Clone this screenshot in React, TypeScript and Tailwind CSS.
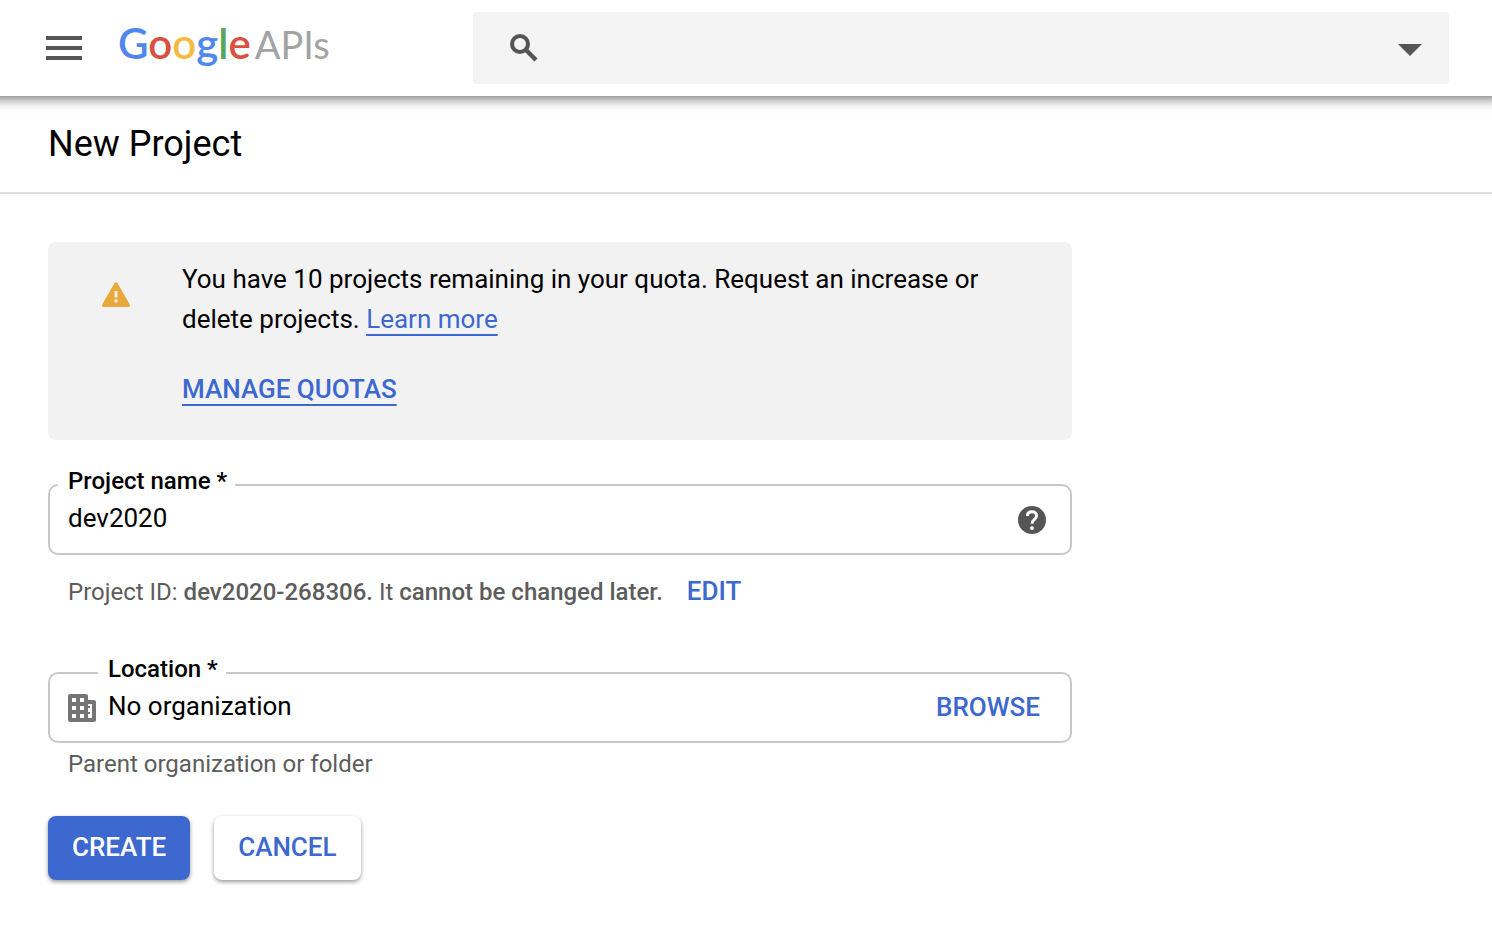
import { useState } from "react";

function GoogleApisLogo() {
  return (
    <a href="#home" className="flex items-baseline gap-1 pb-2.5 leading-[48px]">
      <span className="text-[42px] font-semibold font-[Lato,sans-serif]">
        <span className="text-[#4e87ed]">G</span>
        <span className="text-[#d94f40]">o</span>
        <span className="text-[#f2bc42]">o</span>
        <span className="text-[#4e87ed]">g</span>
        <span className="text-[#58a55c]">l</span>
        <span className="text-[#d94f40]">e</span>
      </span>
      <span className="text-[38px] text-[#a3a3a3] font-[Lato,sans-serif]">APIs</span>
    </a>
  );
}

function Header() {
  return (
    <header className="relative flex h-24 items-center bg-white pr-[43px] pl-[46px] shadow-[0_-10px_12px_12px_rgba(0,0,0,0.6)]">
      <button type="button" aria-label="Open menu" className="shrink-0">
        <svg width="36" height="24" viewBox="0 0 36 24" fill="#555555">
          <path d="M0 0h36v4H0zM0 10h36v4H0zM0 20h36v4H0z" />
        </svg>
      </button>
      <div className="ml-9 w-[355px] shrink-0">
        <GoogleApisLogo />
      </div>
      <label className="flex h-[72px] flex-1 items-center rounded bg-[#f4f4f4] pr-[27px] pl-9">
        <svg width="30" height="30" viewBox="0 0 30 30" fill="none" stroke="#555555">
          <circle cx="11" cy="11" r="8" strokeWidth="4" />
          <path d="M17 17l10 10" strokeWidth="4.4" />
        </svg>
        <input
          type="search"
          aria-label="Search products and resources"
          className="mx-4 h-12 min-w-0 flex-1 bg-transparent text-[26px] outline-none"
        />
        <button type="button" aria-label="Show search options">
          <svg width="24" height="12" viewBox="0 0 24 12" fill="#555555" className="mt-1">
            <path d="M0 0h24L12 12z" />
          </svg>
        </button>
      </label>
    </header>
  );
}

function QuotaNotice() {
  return (
    <section className="flex rounded-lg bg-[#f2f2f2] pt-[17px] pr-16 pb-[31px] pl-[54px]">
      <svg width="28" height="25" viewBox="0 0 28 25" className="mt-[23px] mr-[52px] shrink-0">
        <path
          fill="#e8a83b"
          d="M12.6 1C13.2-.1 14.8-.1 15.4 1L27.8 22.6C28.4 23.7 27.8 25 26.6 25H1.4C.2 25-.4 23.7.2 22.6z"
        />
        <path fill="#f2f2f2" d="M12.6 9h2.8v6.4h-2.8zM12.6 17.6h2.8v2.8h-2.8z" />
      </svg>
      <div className="leading-10">
        <p>
          You have 10 projects remaining in your quota. Request an increase or delete projects.{" "}
          <a
            href="#learn-more"
            className="text-[#3c68cf] underline decoration-2 underline-offset-[6px] [text-decoration-skip-ink:none]"
          >
            Learn more
          </a>
        </p>
        <p className="mt-[30px]">
          <a
            href="#quotas"
            className="font-medium text-[#3c68cf] underline decoration-2 underline-offset-[6px] [text-decoration-skip-ink:none]"
          >
            MANAGE QUOTAS
          </a>
        </p>
      </div>
    </section>
  );
}

export default function App() {
  const [name, setName] = useState("dev2020");
  const [location, setLocation] = useState("No organization");

  return (
    <div className="min-h-screen bg-white font-[Roboto,sans-serif] text-[26px] text-black">
      <Header />
      <div className="flex h-[98px] items-center border-b-2 border-[#e0e0e0]">
        <h1 className="px-12 text-4xl leading-10">New Project</h1>
      </div>
      <main className="px-12 pt-12 pb-12">
        <form className="max-w-5xl" onSubmit={(e) => e.preventDefault()}>
          <QuotaNotice />

          <fieldset className="mt-[27px] rounded-[10px] border-2 border-[#c8c8c8] pb-[18px]">
            <legend className="ml-2 pr-2 pb-2 pl-2.5 text-2xl leading-7 font-medium">
              <label htmlFor="project-name">Project name *</label>
            </legend>
            <div className="flex items-center pr-6 pl-[18px]">
              <input
                id="project-name"
                value={name}
                onChange={(e) => setName(e.target.value)}
                className="h-8 min-w-0 flex-1 bg-transparent pb-0.5 outline-none"
              />
              <button type="button" aria-label="Help with the project name" className="pt-0.5">
                <svg width="28" height="28" viewBox="2 2 20 20" fill="#555555">
                  <path d="M12 2C6.48 2 2 6.48 2 12s4.48 10 10 10 10-4.48 10-10S17.52 2 12 2z" />
                  <path
                    d="M8.7 9.2C8.7 7.1 10.1 6.1 12 6.1s3.3 1.1 3.3 2.9c0 2.6-3.3 2.7-3.3 5.7"
                    fill="none"
                    stroke="#ffffff"
                    strokeWidth="2.1"
                  />
                  <circle cx="12" cy="17.8" r="1.4" fill="#ffffff" />
                </svg>
              </button>
            </div>
          </fieldset>

          <p className="mt-[21px] flex items-center gap-6 pl-5 leading-8 text-[#5c5c5c]">
            <span className="text-2xl leading-8">
              Project ID: <span className="font-medium">dev2020-268306.</span> It{" "}
              <span className="font-medium">cannot be changed later.</span>
            </span>
            <button type="button" className="pb-0.5 leading-[30px] font-medium text-[#3c68cf]">
              EDIT
            </button>
          </p>

          <fieldset className="mt-[47px] rounded-[10px] border-2 border-[#c8c8c8] pb-[18px]">
            <legend className="ml-12 pr-2 pb-2 pl-2.5 text-2xl leading-7 font-medium">
              <label htmlFor="location">Location *</label>
            </legend>
            <div className="flex items-center pr-[30px] pl-[18px]">
              <svg width="28" height="28" viewBox="0 0 28 28" className="mt-0.5 mr-3" fill="#757575">
                <path
                  fillRule="evenodd"
                  d="M2 0h16a2 2 0 0 1 2 2v4h6a2 2 0 0 1 2 2v18a2 2 0 0 1-2 2H2a2 2 0 0 1-2-2V2a2 2 0 0 1 2-2zM4 4v4h4V4zM12 4v4h4V4zM4 12v4h4v-4zM12 12v4h4v-4zM4 20v4h4v-4zM12 20v4h4v-4zM20 10v2h2v2h-2v4h2v2h-2v4h4V10z"
                />
                <path d="M20 12h2v2h-2zM20 18h2v2h-2z" />
              </svg>
              <input
                id="location"
                value={location}
                onChange={(e) => setLocation(e.target.value)}
                aria-describedby="location-hint"
                className="h-8 min-w-0 flex-1 bg-transparent pb-0.5 outline-none"
              />
              <button type="button" className="leading-8 font-medium text-[#3c68cf]">
                BROWSE
              </button>
            </div>
          </fieldset>
          <p id="location-hint" className="mt-[5px] pl-5 text-2xl leading-8 text-[#5c5c5c]">
            Parent organization or folder
          </p>

          <div className="mt-9 flex gap-6">
            <button
              type="submit"
              className="h-16 rounded-lg bg-[#3c68cf] px-6 pb-0.5 font-medium text-white shadow-[0_2px_4px_rgba(0,0,0,0.4)]"
            >
              CREATE
            </button>
            <button
              type="button"
              className="h-16 rounded-lg bg-white px-6 pb-0.5 font-medium text-[#3c68cf] shadow-[0_2px_4px_rgba(0,0,0,0.4)]"
            >
              CANCEL
            </button>
          </div>
        </form>
      </main>
    </div>
  );
}
